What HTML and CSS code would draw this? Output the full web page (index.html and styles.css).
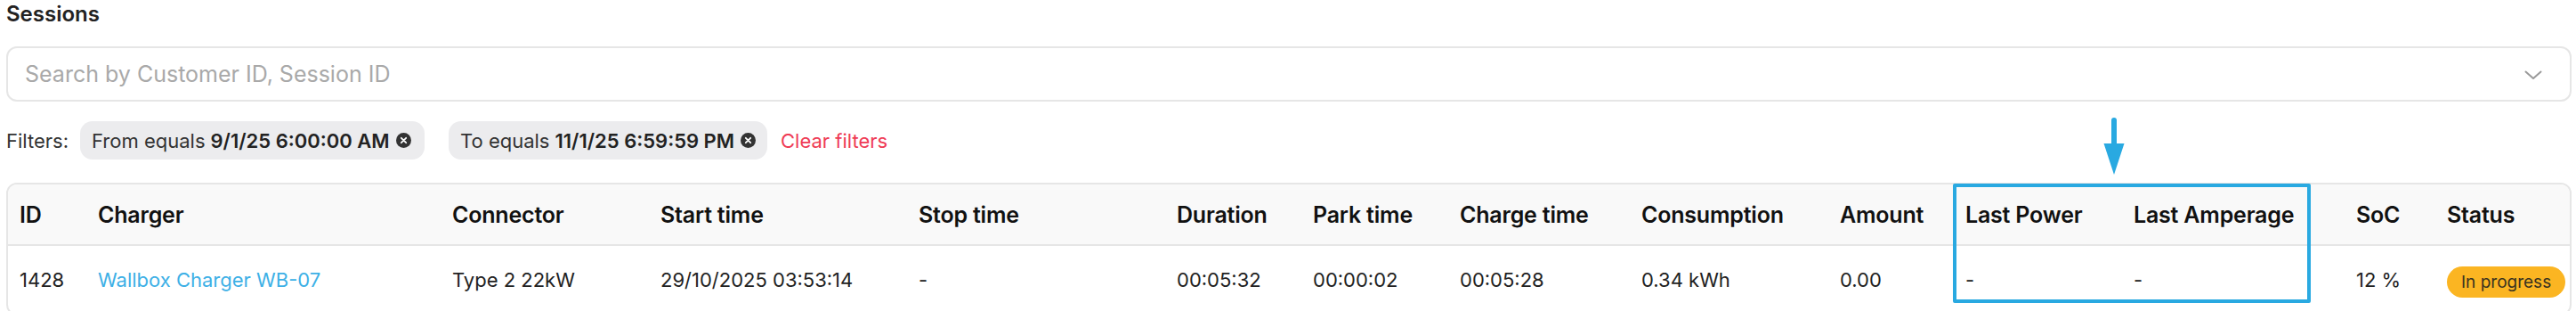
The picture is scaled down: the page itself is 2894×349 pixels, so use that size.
FILE: index.html
```html
<!DOCTYPE html>
<html lang="en">
<head>
<meta charset="utf-8">
<title>Sessions</title>
<link rel="stylesheet" href="styles.css">
</head>
<body>
<div class="page">
  <h1 class="title">Sessions</h1>
  <div class="search">
    <span class="placeholder">Search by Customer ID, Session ID</span>
    <svg class="chevron" width="20" height="11" viewBox="0 0 20 11"><path d="M1.5 1.5 L10 9 L18.5 1.5" fill="none" stroke="#9a9a9a" stroke-width="2" stroke-linecap="round" stroke-linejoin="round"/></svg>
  </div>
  <div class="filters">
    <span class="filters-label">Filters:</span>
    <span class="chip chip-from">From equals <b>9/1/25 6:00:00 AM</b>
      <svg class="chip-x" width="17" height="17" viewBox="0 0 17 17"><circle cx="8.5" cy="8.5" r="8.5" fill="#333"/><path d="M5.8 5.8 L11.2 11.2 M11.2 5.8 L5.8 11.2" stroke="#fff" stroke-width="1.8" stroke-linecap="round"/></svg>
    </span>
    <span class="chip chip-to">To equals <b>11/1/25 6:59:59 PM</b>
      <svg class="chip-x" width="17" height="17" viewBox="0 0 17 17"><circle cx="8.5" cy="8.5" r="8.5" fill="#333"/><path d="M5.8 5.8 L11.2 11.2 M11.2 5.8 L5.8 11.2" stroke="#fff" stroke-width="1.8" stroke-linecap="round"/></svg>
    </span>
    <span class="clear">Clear filters</span>
  </div>
  <div class="table">
    <div class="row head">
      <div>ID</div><div>Charger</div><div>Connector</div><div>Start time</div><div>Stop time</div><div>Duration</div><div>Park time</div><div>Charge time</div><div>Consumption</div><div>Amount</div><div>Last Power</div><div>Last Amperage</div><div>SoC</div><div>Status</div>
    </div>
    <div class="row body">
      <div>1428</div><div class="link">Wallbox Charger WB-07</div><div>Type 2 22kW</div><div>29/10/2025 03:53:14</div><div>-</div><div>00:05:32</div><div>00:00:02</div><div>00:05:28</div><div>0.34 kWh</div><div>0.00</div><div>-</div><div>-</div><div>12 %</div><div><span class="badge">In progress</span></div>
    </div>
  </div>
  <div class="highlight"></div>
  <svg class="arrow" width="26" height="66" viewBox="0 0 26 66"><path d="M13 3 L13 32" stroke="#29a9e1" stroke-width="6" stroke-linecap="round"/><path d="M1.5 29 L24.5 29 L13 64 Z" fill="#29a9e1"/></svg>
</div>
</body>
</html>
```
FILE: styles.css
```css
* { box-sizing: border-box; }
html, body { margin: 0; padding: 0; background: #fff; }
body { font-family: Inter, "Noto Sans", sans-serif; color: #222; }
.page { position: relative; padding: 1px 5px 0 7px; width: 2894px; height: 349px; overflow: hidden; }
.title { margin: 0; font-size: 24px; line-height: 30px; font-weight: 600; color: #222; }
.search { margin-top: 21px; height: 62px; border: 2px solid #e6e6e6; border-radius: 12px; display: flex; align-items: center; justify-content: space-between; padding: 0 31px 0 19px; }
.placeholder { font-size: 25px; color: #a9a9a9; }
.chevron { display: block; margin-top: 2px; }
.filters { margin-top: 22px; display: flex; align-items: center; height: 43px; font-size: 22px; }
.filters-label { color: #333; margin-right: 13px; }
.chip { display: inline-flex; align-items: center; height: 43px; background: #ececee; border-radius: 14px; padding: 0 11px 0 13px; color: #333; white-space: nowrap; }
.chip b { font-weight: 600; color: #222; margin-left: 6px; }
.chip-x { margin-left: 7px; display: block; }
.chip-from { width: 387px; }
.chip-to { width: 358px; margin-left: 27px; }
.clear { color: #ef3b55; margin-left: 15px; }
.table { margin-top: 26px; border: 2px solid #e6e6e6; border-radius: 12px; overflow: hidden; }
.row { display: grid; grid-template-columns: 88px 398px 234px 290px 290px 153px 165px 204px 223px 141px 189px 250px 102px 1fr; align-items: center; padding-left: 13px; white-space: nowrap; }
.head { height: 69px; background: #f9f9f9; border-bottom: 2px solid #e6e6e6; font-size: 25px; font-weight: 600; color: #111; letter-spacing: -0.2px; }
.body { height: 76px; font-size: 22px; color: #222; }
.link { color: #3db0e6; }
.badge { display: inline-block; background: #fbb522; color: #3a3320; border-radius: 18px; height: 35px; line-height: 35px; padding: 0 16px; font-size: 19px; margin-top: 4px; }
.highlight { position: absolute; left: 2194px; top: 206px; width: 402px; height: 134px; border: 4px solid #29a9e1; border-radius: 2px; }
.arrow { position: absolute; left: 2362px; top: 132px; }
```
